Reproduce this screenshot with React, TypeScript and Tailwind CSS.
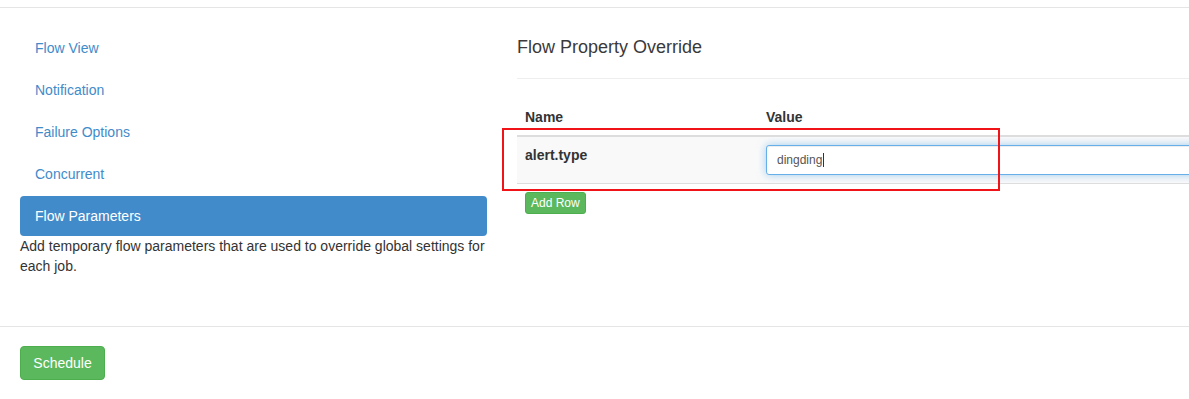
const navItems = ["Flow View", "Notification", "Failure Options", "Concurrent", "Flow Parameters"];

export default function App() {
  const active = "Flow Parameters";

  return (
    <div
      className="w-[1189px] h-[399px] overflow-hidden bg-white text-[14px] leading-5 text-[#333]"
      style={{ fontFamily: '"Liberation Sans", Arial, sans-serif' }}
    >
      {/* header stub */}
      <div className="h-[8px] border-b border-[#e5e5e5]" />

      {/* body */}
      <div className="h-[318px] flex gap-[30px] pl-[20px] pt-[20px]">
        {/* left nav */}
        <div className="w-[467px] shrink-0">
          <ul className="flex flex-col gap-[2px]">
            {navItems.map((item) => (
              <li key={item}>
                <a
                  className={`block px-[15px] py-[10px] rounded-[4px] ${
                    item === active ? "bg-[#428bca] text-white" : "text-[#428bca]"
                  }`}
                >
                  {item}
                </a>
              </li>
            ))}
          </ul>
          <p>Add temporary flow parameters that are used to override global settings for each job.</p>
        </div>

        {/* right panel */}
        <div className="w-[964px] shrink-0">
          <h4 className="mt-[9px] text-[18px] leading-[20px] font-normal text-[#3a3a3a]">Flow Property Override</h4>
          <hr className="mt-[21px] border-t border-[#eee]" />

          <div className="relative mt-[20px]">
            <table className="w-full border-collapse">
              <thead>
                <tr>
                  <th className="w-1/4 p-[8px] text-left font-bold border-b-2 border-[#ddd]">Name</th>
                  <th className="p-[8px] text-left font-bold border-b-2 border-[#ddd]">Value</th>
                </tr>
              </thead>
              <tbody>
                <tr className="bg-[#f9f9f9]">
                  <td className="p-[8px] align-top font-bold">alert.type</td>
                  <td className="p-[8px] align-top">
                    <div className="h-[30px] flex items-center rounded-[3px] border border-[#66afe9] bg-white px-[10px] text-[12px] text-[#555] shadow-[inset_0_1px_1px_rgba(0,0,0,0.075),0_0_8px_rgba(102,175,233,0.6)]">
                      dingding
                      <span className="ml-px inline-block w-px h-[14px] bg-[#333]" />
                    </div>
                  </td>
                </tr>
                <tr>
                  <td colSpan={2} className="px-[8px] pt-[8px] border-t border-[#ddd]">
                    <button className="h-[22px] px-[5px] rounded-[3px] border border-[#4cae4c] bg-[#5cb85c] text-white text-[12px] leading-[18px]">
                      Add Row
                    </button>
                  </td>
                </tr>
              </tbody>
            </table>

            {/* annotation box */}
            <div className="absolute left-[-15px] top-[29px] w-[498px] h-[63px] border-2 border-[#f01418] pointer-events-none" />
          </div>
        </div>
      </div>

      {/* footer */}
      <div className="border-t border-[#e5e5e5] px-[20px] pt-[19px]">
        <button className="h-[34px] w-[85px] rounded-[4px] border border-[#4cae4c] bg-[#5cb85c] text-white text-[14px]">
          Schedule
        </button>
      </div>
    </div>
  );
}
